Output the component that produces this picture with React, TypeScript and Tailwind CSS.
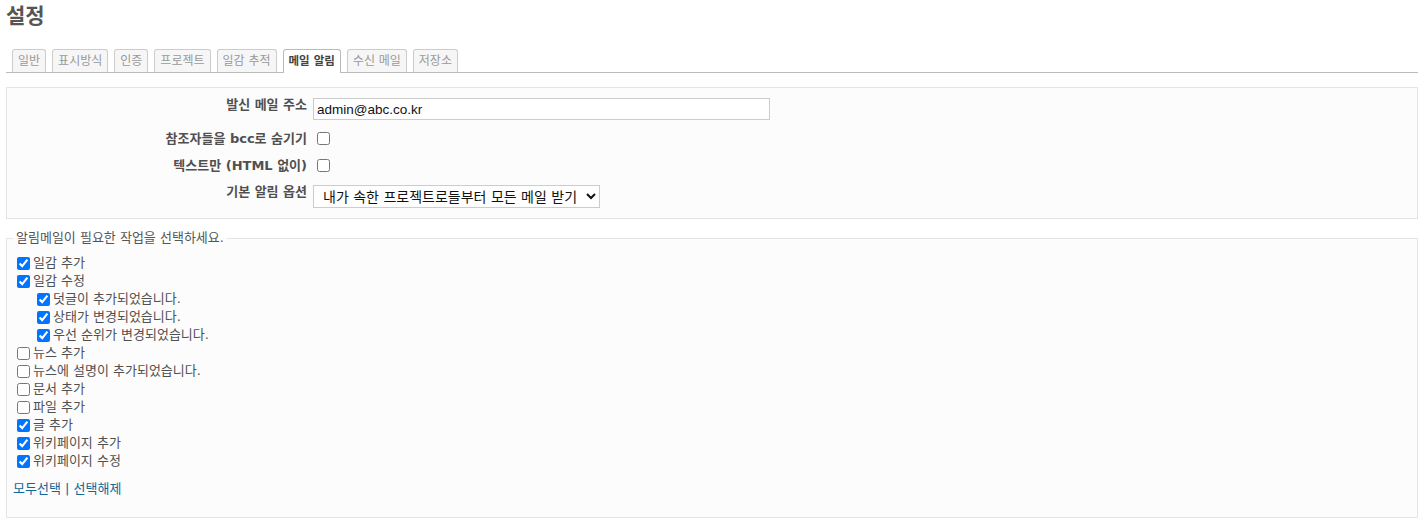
import type { ReactNode } from "react";

const tabs = ["일반", "표시방식", "인증", "프로젝트", "일감 추적", "메일 알림", "수신 메일", "저장소"];

type Notice = { label: string; checked: boolean; nested?: boolean };

const notices: Notice[] = [
  { label: "일감 추가", checked: true },
  { label: "일감 수정", checked: true },
  { label: "덧글이 추가되었습니다.", checked: true, nested: true },
  { label: "상태가 변경되었습니다.", checked: true, nested: true },
  { label: "우선 순위가 변경되었습니다.", checked: true, nested: true },
  { label: "뉴스 추가", checked: false },
  { label: "뉴스에 설명이 추가되었습니다.", checked: false },
  { label: "문서 추가", checked: false },
  { label: "파일 추가", checked: false },
  { label: "글 추가", checked: true },
  { label: "위키페이지 추가", checked: true },
  { label: "위키페이지 수정", checked: true },
];

function Row({ label, children, className }: { label: string; children: ReactNode; className: string }) {
  return (
    <div className={"flex " + className}>
      <label className="w-[300px] shrink-0 text-right font-bold text-[13px] leading-[14px] text-[#505050]">{label}</label>
      <div className="ml-[6px] flex items-center">{children}</div>
    </div>
  );
}

export default function App() {
  return (
    <div className="min-h-screen bg-white px-[6px] pt-[4px] font-['Verdana','DejaVu_Sans','Noto_Sans_CJK_KR',sans-serif] text-[13px] text-[#444]">
      <h2 className="text-[21px] leading-[24px] font-bold text-[#555]">설정</h2>

      <ul className="mt-[21px] flex items-end gap-[6px] border-b border-[#bbb] pl-[6px]">
        {tabs.map(t =>
          t === "메일 알림" ? (
            <li key={t} className="-mb-px h-[24px] rounded-t-[3px] border border-b-0 border-[#bbb] bg-white px-[5px] text-[11.5px] leading-[22px] font-bold text-[#444]">
              {t}
            </li>
          ) : (
            <li key={t} className="h-[23px] rounded-t-[3px] border border-b-0 border-[#ccc] bg-[#f6f6f6] px-[5px] text-[12px] leading-[22px] text-[#999]">
              {t}
            </li>
          )
        )}
      </ul>

      <div className="mt-[14px] border border-[#e4e4e4] bg-[#fcfcfc] pt-[10px] pb-[10px]">
        <Row label="발신 메일 주소" className="items-start">
          <input
            defaultValue="admin@abc.co.kr"
            className="h-[22px] w-[457px] border border-[#ccc] bg-white pl-[3px] font-['Liberation_Sans',sans-serif] text-[13.5px] text-[#111] outline-none"
          />
        </Row>
        <Row label="참조자들을 bcc로 숨기기" className="mt-[12px] h-[13px] items-center">
          <input type="checkbox" className="ml-[4px] h-[13px] w-[13px]" />
        </Row>
        <Row label="텍스트만 (HTML 없이)" className="mt-[14px] h-[13px] items-center">
          <input type="checkbox" className="ml-[4px] h-[13px] w-[13px]" />
        </Row>
        <Row label="기본 알림 옵션" className="mt-[13px] items-start">
          <select className="h-[23px] w-[287px] border border-[#ccc] bg-white pl-[5px] text-[14px] text-[#111]">
            <option>내가 속한 프로젝트로들부터 모든 메일 받기</option>
          </select>
        </Row>
      </div>

      <fieldset className="mt-[11px] border border-[#e4e4e4] bg-[#fcfcfc] px-[6px] pt-[8px] pb-[20px]">
        <legend className="px-[3px] text-[13px] leading-[16px] text-[#555]">알림메일이 필요한 작업을 선택하세요.</legend>
        {notices.map(n => (
          <label key={n.label} className={"flex h-[18px] items-center text-[#505050] " + (n.nested ? "pl-[20px]" : "")}>
            <input type="checkbox" defaultChecked={n.checked} className="ml-[4px] mr-[3px] h-[13px] w-[13px]" />
            {n.label}
          </label>
        ))}
        <p className="mt-[11px] leading-[16px] text-[#169]">
          <a href="#" className="text-[#169]">모두선택</a> | <a href="#" className="text-[#169]">선택해제</a>
        </p>
      </fieldset>
    </div>
  );
}
